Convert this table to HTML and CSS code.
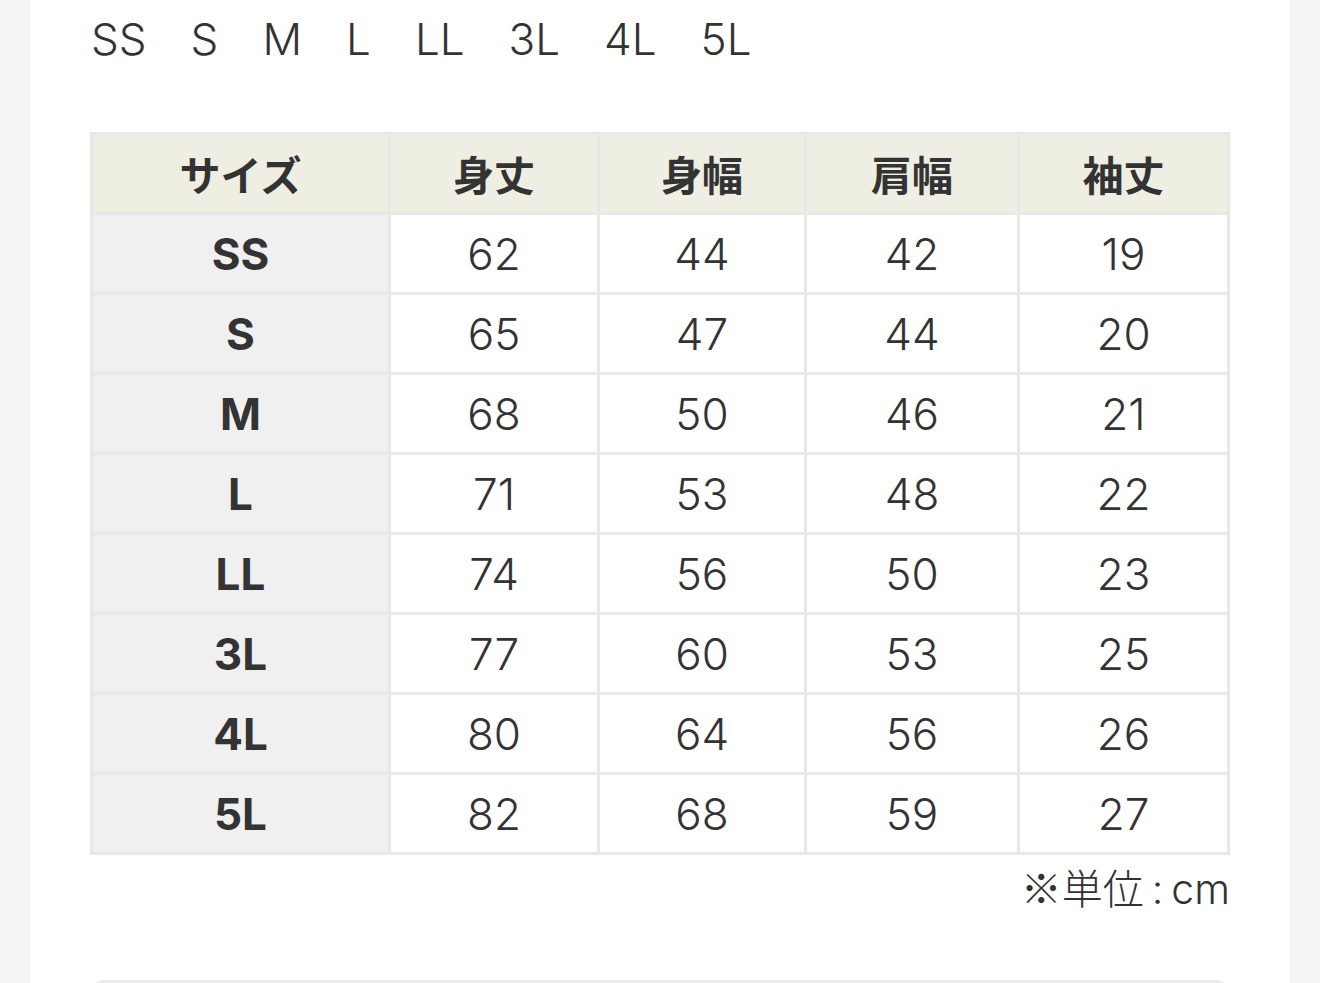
FILE: index.html
```html
<!DOCTYPE html>
<html lang="ja">
<head>
<meta charset="utf-8">
<link rel="stylesheet" href="styles.css">
</head>
<body>
<div class="panel">
  <div class="sizes">
    <span>SS</span><span>S</span><span>M</span><span>L</span><span>LL</span><span>3L</span><span>4L</span><span>5L</span>
  </div>
  <table class="chart">
    <colgroup>
      <col class="c1"><col class="c2"><col class="c3"><col class="c4"><col class="c5">
    </colgroup>
    <thead>
      <tr><th>サイズ</th><th>身丈</th><th>身幅</th><th>肩幅</th><th>袖丈</th></tr>
    </thead>
    <tbody>
      <tr><th>SS</th><td>62</td><td>44</td><td>42</td><td>19</td></tr>
      <tr><th>S</th><td>65</td><td>47</td><td>44</td><td>20</td></tr>
      <tr><th>M</th><td>68</td><td>50</td><td>46</td><td>21</td></tr>
      <tr><th>L</th><td>71</td><td>53</td><td>48</td><td>22</td></tr>
      <tr><th>LL</th><td>74</td><td>56</td><td>50</td><td>23</td></tr>
      <tr><th>3L</th><td>77</td><td>60</td><td>53</td><td>25</td></tr>
      <tr><th>4L</th><td>80</td><td>64</td><td>56</td><td>26</td></tr>
      <tr><th>5L</th><td>82</td><td>68</td><td>59</td><td>27</td></tr>
    </tbody>
  </table>
  <p class="unit"><span class="jp">※単位</span><span class="colon">:</span>cm</p>
  <div class="next-box"></div>
</div>
</body>
</html>
```

FILE: styles.css
```css
html, body {
  margin: 0;
  padding: 0;
  background: #f4f4f4;
  height: 983px;
  overflow: hidden;
}
body {
  font-family: Inter, "Noto Sans CJK JP", "Noto Sans", sans-serif;
  color: #333333;
}
.panel {
  margin: 0 30px;
  background: #ffffff;
  padding: 0 60px 0 60px;
  height: 983px;
  box-sizing: border-box;
  overflow: hidden;
}
.sizes {
  display: flex;
  gap: 44px;
  font-size: 44px;
  font-weight: 300;
  line-height: 1;
  padding-top: 17px;
  padding-left: 1px;
  height: 132px;
  box-sizing: border-box;
}
.chart {
  width: 100%;
  border-collapse: collapse;
  table-layout: fixed;
  border: 3px solid #e8e8e8;
}
.c1 { width: 298px; }
.c2 { width: 209px; }
.c3 { width: 207px; }
.c4 { width: 213px; }
.chart th, .chart td {
  border: 3px solid #e8e8e8;
  height: 80px;
  padding: 0;
  text-align: center;
  vertical-align: middle;
  font-size: 44px;
  line-height: 1;
  box-sizing: border-box;
}
.chart thead th {
  background: #efeee3;
  font-family: "Noto Sans CJK JP", sans-serif;
  font-weight: 700;
  font-size: 41px;
}
.chart tbody th {
  background: #f0f0f0;
  font-weight: 700;
}
.chart td {
  font-weight: 300;
  background: #ffffff;
}
.unit {
  margin: 11px 0 0;
  text-align: right;
  font-size: 41px;
  font-weight: 300;
  line-height: 1;
}
.jp {
  font-family: "Noto Sans CJK JP", sans-serif;
}
.colon {
  margin: 0 8px;
}
.next-box {
  margin-top: 70px;
  height: 40px;
  border: 3px solid #ececec;
  border-radius: 14px;
}
```
